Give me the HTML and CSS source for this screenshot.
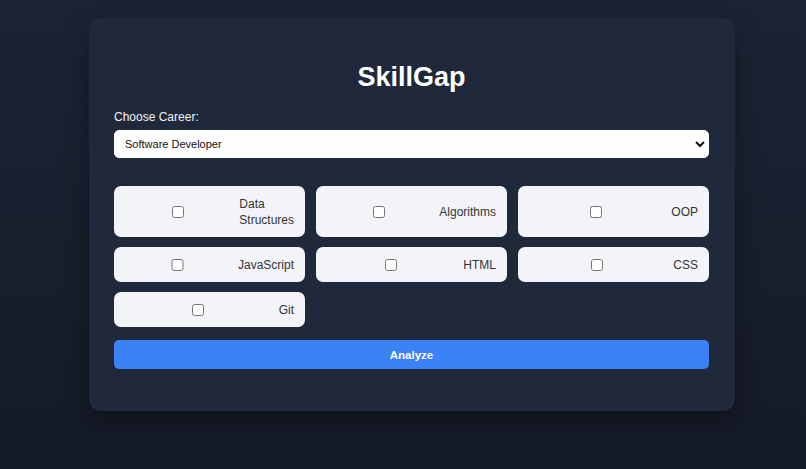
FILE: index.html
```html
<!DOCTYPE html>
<html lang="en">
<head>
<meta charset="utf-8">
<title>SkillGap</title>
<link rel="stylesheet" href="styles.css">
</head>
<body>
<main class="card">
  <h1 class="title">SkillGap</h1>
  <label class="field-label" for="career">Choose Career:</label>
  <select id="career" class="career-select">
    <option>Software Developer</option>
  </select>
  <div class="skills">
    <label class="skill"><input type="checkbox"><span>Data Structures</span></label>
    <label class="skill"><input type="checkbox"><span>Algorithms</span></label>
    <label class="skill"><input type="checkbox"><span>OOP</span></label>
    <label class="skill"><input type="checkbox"><span>JavaScript</span></label>
    <label class="skill"><input type="checkbox"><span>HTML</span></label>
    <label class="skill"><input type="checkbox"><span>CSS</span></label>
    <label class="skill"><input type="checkbox"><span>Git</span></label>
  </div>
  <button class="analyze" type="button">Analyze</button>
</main>
</body>
</html>
```
FILE: styles.css
```css
html, body {
  margin: 0;
  padding: 0;
}
body {
  min-height: 469px;
  background: linear-gradient(to bottom, #1c2334 0%, #181e2c 60%, #141a26 100%);
  font-family: "Liberation Sans", Arial, sans-serif;
  padding-top: 18px;
  box-sizing: border-box;
}
.card {
  width: 646px;
  box-sizing: border-box;
  margin-left: 89px;
  padding: 25px 26px 42px 25px;
  background: #1f293b;
  border-radius: 12px;
  box-shadow: 0 10px 25px rgba(0, 0, 0, 0.35);
  display: flex;
  flex-direction: column;
}
.title {
  margin: 18px 0 17px;
  font-size: 27px;
  line-height: 32px;
  font-weight: bold;
  color: #ffffff;
  text-align: center;
}
.field-label {
  display: block;
  font-size: 12px;
  line-height: 15px;
  color: #f1f5f9;
  margin-bottom: 5px;
}
.career-select {
  height: 28px;
  width: 100%;
  box-sizing: border-box;
  padding: 0 6px;
  font-family: "Liberation Sans", Arial, sans-serif;
  font-size: 11px;
  color: #111;
  background: #ffffff;
  border: 1px solid #ffffff;
  border-radius: 5px;
}
.skills {
  margin-top: 28px;
  display: grid;
  grid-template-columns: repeat(3, 1fr);
  column-gap: 11px;
  row-gap: 10px;
}
.skill {
  display: flex;
  align-items: center;
  gap: 7px;
  padding: 9.5px 11px 9.5px 10px;
  background: #f3f4f8;
  border-radius: 7px;
  color: #333;
  font-size: 12px;
  line-height: 16px;
}
.skill input {
  width: 100%;
  height: 12px;
  margin: 0;
}
.analyze {
  margin-top: 13px;
  height: 29px;
  width: 100%;
  border: none;
  border-radius: 5px;
  background: #3b82f6;
  color: #ffffff;
  font-family: "Liberation Sans", Arial, sans-serif;
  font-weight: bold;
  font-size: 11.5px;
}
```
